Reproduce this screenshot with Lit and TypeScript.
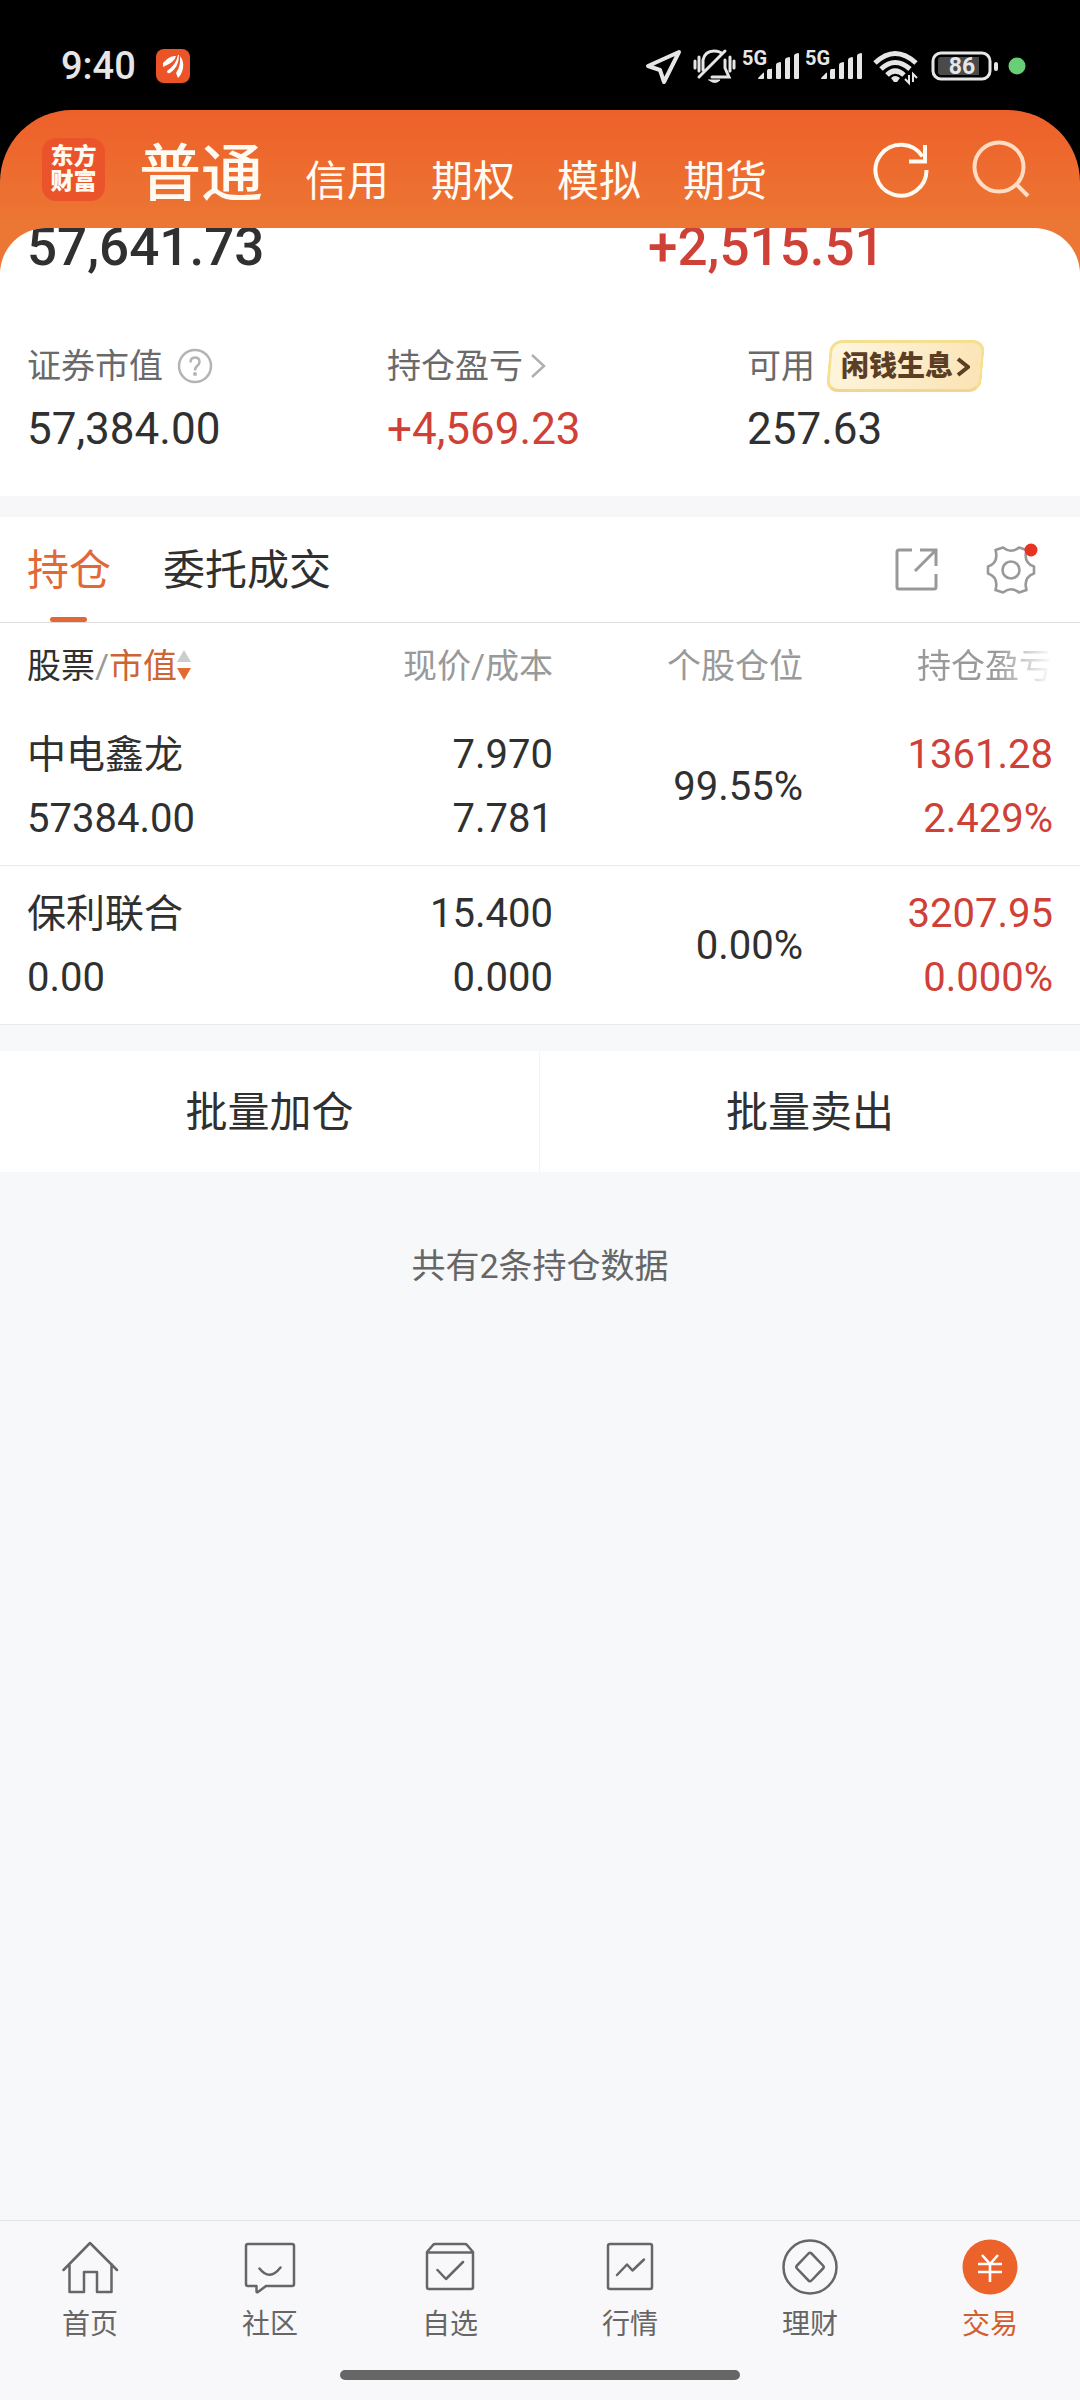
import { LitElement, html, css, svg } from "lit";
import { customElement, state } from "lit/decorators.js";
import { classMap } from "lit/directives/class-map.js";

interface Holding {
  name: string;
  value: string;
  price: string;
  cost: string;
  share: string;
  profit: string;
  rate: string;
}

const HOLDINGS: Holding[] = [
  { name: "中电鑫龙", value: "57384.00", price: "7.970", cost: "7.781", share: "99.55%", profit: "1361.28", rate: "2.429%" },
  { name: "保利联合", value: "0.00", price: "15.400", cost: "0.000", share: "0.00%", profit: "3207.95", rate: "0.000%" },
];

const MARKETS = ["普通", "信用", "期权", "模拟", "期货"];

const NAV = [
  {
    label: "首页",
    icon: svg`<path d="M3.500 31 30 4l27 27M9.500 25v28H24V33h13v20h14.500V25"/>`,
  },
  {
    label: "社区",
    icon: svg`<path d="M8 5h44q2 0 2 2v38q0 2-2 2H26l-8 6q-1.500 1-1.500-1v-5H8q-2 0-2-2V7q0-2 2-2zM19.500 29.500q10 13 21-1"/>`,
  },
  {
    label: "自选",
    icon: svg`<path d="M7 13l6-7q1-1 2-1h30q1 0 2 1l6 7v35q0 2-2 2H9q-2 0-2-2zM7 13.500h46M17.500 31l8.500 9 17-17"/>`,
  },
  {
    label: "行情",
    icon: svg`<rect x="8" y="5" width="44" height="45" rx="2"/><path d="M17 36 27 25.500l5.500 6L44 20.500"/>`,
  },
  {
    label: "理财",
    icon: svg`<circle cx="30" cy="28" r="26.500"/><path d="M28.500 14.500q1.500-1.500 3 0L43 26.500q1.500 1.500 0 3L31.500 41.500q-1.500 1.500-3 0L17 29.500q-1.500-1.500 0-3z"/>`,
  },
  {
    label: "交易",
    icon: svg`<circle cx="30" cy="28" r="27.500" fill="#ec622b" stroke="none"/><path stroke="#fff" stroke-linecap="butt" stroke-width="2.600" d="M22 16l8 9 8-9M18 25h24M18 33h24M30 24v19"/>`,
  },
];

const bars = svg`<path fill="#e6e6e6" d="M16 31q0-1 1-2l4-4q1-1 1 0v5q0 1-1 1h-4q-1 0-1-1zM25 23q0-1 1-2h3q1-1 1 0v9q0 1-1 1h-3q-1 0-1-1zM34 17q0-1 1-2l3-1q1 0 1 1v15q0 1-1 1h-3q-1 0-1-1zM43 12q0-1 1-2l3-1q1 0 1 1v20q0 1-1 1h-3q-1 0-1-1zM52 8q0-1 1-2l3-1q1 0 1 1v24q0 1-1 1h-3q-1 0-1-1z"/>`;

@customElement("status-bar")
export class StatusBar extends LitElement {
  static styles = css`
    :host {
      display: flex;
      align-items: center;
      justify-content: space-between;
      box-sizing: border-box;
      height: 110px;
      padding: 22px 54px 0 61px;
      color: #e6e6e6;
      background: #000;
    }
    .left {
      display: flex;
      align-items: center;
      gap: 20px;
      font-size: 38px;
      line-height: 40px;
      font-weight: 500;
    }
    .right {
      display: flex;
      align-items: center;
      gap: 4px;
    }
    svg {
      display: block;
      overflow: visible;
      fill: none;
    }
    text {
      fill: #e6e6e6;
      font-family: Roboto, sans-serif;
      font-weight: 700;
    }
  `;

  private signal() {
    return html`<svg width="59" height="36" viewBox="0 0 59 36" aria-hidden="true">
      <text x="0" y="17" font-size="20">5G</text>${bars}
    </svg>`;
  }

  render() {
    return html`
      <div class="left">
        <time>9:40</time>
        <svg width="34" height="34" viewBox="0 0 34 34" aria-hidden="true">
          <rect width="34" height="34" rx="8" fill="#ec5428" />
          <path fill="#fff" d="M7 14Q14 6 20 7q-1 6-13 11zM11 22Q20 16 22 6h1q0 12-9 18-3 1-3-2zM20 24q5-7 4-17 4 5 3 12-1 6-5 10z" />
        </svg>
      </div>
      <div class="right">
        <svg width="44" height="36" viewBox="0 0 44 36" aria-hidden="true">
          <path d="M35 4 4 18l12 4 4 12z" stroke="#e6e6e6" stroke-width="4" stroke-linejoin="round" />
        </svg>
        <svg width="46" height="36" viewBox="0 0 46 36" aria-hidden="true" stroke="#e6e6e6" stroke-width="3" stroke-linecap="round">
          <path d="M11 22V12Q13 3 22 3q6 0 8 3M33 12v8l4 9H20M7 29 33 3M3 13v7M7 9v14M38 9v14M42 13v7" />
          <path d="M17 32h11q-5 5-11 0z" fill="#e6e6e6" stroke-width="1" />
        </svg>
        ${this.signal()}${this.signal()}
        <svg width="56" height="36" viewBox="0 0 56 36" aria-hidden="true" stroke="#e6e6e6" stroke-width="5">
          <path d="M7 15q20-19 41 0M13 21q14-13 29 0M19 27q8-8 17 0" />
          <path d="M23 30q4-4 9 0l-3 4h-3z" fill="#e6e6e6" stroke="none" />
          <path d="M41 27v8l-4-4M45 34v-8l4 4" stroke-width="2" />
        </svg>
        <svg width="74" height="36" viewBox="0 0 74 36" role="img" aria-label="86%">
          <rect x="5" y="5" width="57" height="26" rx="8" stroke="#e6e6e6" stroke-width="3" />
          <path d="M10 12q0-3 3-3h38v18H13q-3 0-3-3z" fill="#4a4a4a" />
          <rect x="66" y="14" width="4" height="9" rx="2" fill="#e6e6e6" />
          <text x="34" y="26" font-size="23" text-anchor="middle">86</text>
        </svg>
        <svg width="20" height="36" viewBox="0 0 20 36" aria-hidden="true">
          <circle cx="11" cy="18" r="8.500" fill="#69cf76" />
        </svg>
      </div>
    `;
  }
}

@customElement("app-root")
export class AppRoot extends LitElement {
  @state() private market = 0;
  @state() private nav = 5;

  static styles = css`
    :host {
      display: flex;
      flex-direction: column;
      min-height: 100vh;
      color: #303030;
      background: #f6f8fa;
      font-family: Roboto, "Noto Sans CJK SC", sans-serif;
    }
    button {
      padding: 0;
      border: 0;
      background: none;
      color: inherit;
      font: inherit;
      cursor: pointer;
    }
    a {
      color: inherit;
      text-decoration: none;
    }
    svg {
      display: block;
      fill: none;
    }

    .shell {
      background: #000;
    }
    .app {
      border-radius: 72px 72px 0 0;
      background: linear-gradient(#ee602a, #ec7734 118px);
    }
    .header {
      display: flex;
      align-items: center;
      box-sizing: border-box;
      height: 118px;
      padding: 0 49px 0 42px;
      color: #fffaf2;
    }
    .logo {
      display: grid;
      place-content: center;
      width: 63px;
      height: 63px;
      margin-right: 34px;
      border-radius: 14px;
      background: #eb542a;
      font-size: 23px;
      line-height: 25px;
      font-weight: 900;
      text-align: center;
    }
    .markets {
      display: flex;
      align-items: baseline;
      flex: 1;
      gap: 42px;
      padding-top: 18px;
      font-size: 42px;
      line-height: 72px;
      white-space: nowrap;
    }
    .market.current {
      font-size: 62px;
      font-weight: 500;
    }
    .tools {
      display: flex;
      gap: 40px;
    }

    .panel {
      overflow: hidden;
      border-radius: 46px 46px 0 0;
      background: #fff;
    }
    .totals {
      display: grid;
      grid-template-columns: 3fr 2fr;
      margin-top: -11px;
      font-size: 53px;
      line-height: 60px;
      font-weight: 500;
    }
    .total:first-child {
      padding-left: 27px;
    }
    .metrics {
      display: grid;
      grid-template-columns: repeat(3, 1fr);
      margin: 0;
      padding: 63px 0 41px;
    }
    .metric {
      padding-left: 27px;
    }
    .metric-name {
      display: flex;
      align-items: center;
      height: 52px;
      margin-bottom: 11px;
      color: #6a6a6a;
      font-size: 34px;
      line-height: 54px;
      white-space: nowrap;
    }
    .metric-value {
      margin: 0;
      font-size: 44px;
      line-height: 52px;
    }
    .help {
      margin-left: 14px;
    }
    .more {
      display: flex;
      align-items: center;
      gap: 7px;
    }
    .badge {
      position: relative;
      display: flex;
      align-items: center;
      gap: 3px;
      height: 50px;
      margin-left: 11px;
      padding: 2px 15px 0;
      color: #5c3e24;
      font-size: 28px;
      font-weight: 900;
      isolation: isolate;
    }
    .badge::before {
      content: "";
      position: absolute;
      inset: 0 2px;
      z-index: -1;
      box-sizing: border-box;
      border: 3px solid #f6e08f;
      border-bottom-color: #f3d592;
      border-radius: 12px;
      background: linear-gradient(115deg, #fef6de, #fbe3b4);
      transform: skewX(-5deg);
    }
    .rise {
      color: #cf4037;
    }

    .holdings {
      margin-top: 21px;
      background: #fff;
    }
    .gap {
      background: #f7f7fa;
      overflow: hidden;
    }
    .tabs {
      display: flex;
      align-items: center;
      box-sizing: border-box;
      height: 106px;
      padding: 0 42px 0 27px;
      border-bottom: 1px solid #dcdcdc;
      font-size: 42px;
      line-height: 103px;
    }
    .tab {
      position: relative;
      margin-right: 52px;
      padding-top: 2px;
    }
    .tab.current {
      color: #df6a37;
    }
    .tab.current::after {
      content: "";
      position: absolute;
      bottom: 0;
      left: calc(50% - 19px);
      width: 37px;
      height: 5px;
      border-radius: 3px;
      background: #e26735;
    }
    .tab-tools {
      display: flex;
      align-items: center;
      gap: 46px;
      margin-left: auto;
    }

    table {
      width: 100%;
      table-layout: fixed;
      border-spacing: 0;
      border-collapse: separate;
    }
    .col-number {
      width: 250px;
    }
    .col-last {
      width: 277px;
    }
    th,
    td {
      padding: 0;
      text-align: right;
      font-weight: 400;
      white-space: nowrap;
    }
    th:first-child {
      padding-left: 27px;
      text-align: left;
    }
    th:last-child,
    td:last-child {
      padding-right: 27px;
    }
    thead th {
      height: 82px;
      padding-top: 2px;
      color: #999;
      font-size: 34px;
      line-height: 82px;
    }
    .sort {
      display: flex;
      align-items: center;
    }
    .sort-stock {
      color: #303030;
    }
    .sort-value {
      color: #cd6434;
    }
    .fade {
      mask-image: linear-gradient(to right, #000 58%, transparent 100%);
    }
    tbody th,
    tbody td {
      height: 128px;
      padding-top: 16px;
      padding-bottom: 14px;
      border-bottom: 1px solid #ebebeb;
      font-size: 40px;
      line-height: 64px;
    }
    .line {
      display: block;
    }
    .stock {
      font-size: 39px;
    }

    .actions {
      display: grid;
      grid-template-columns: 1fr 1fr;
      margin-top: 26px;
      background: #fff;
    }
    .action {
      padding-top: 2px;
      font-size: 42px;
      line-height: 119px;
    }
    .action:first-child {
      border-right: 1px solid #f3f3f3;
    }
    .note {
      margin: 68px 0;
      color: #666;
      font-size: 34px;
      line-height: 52px;
      text-align: center;
    }

    .bottom {
      position: sticky;
      bottom: 0;
      margin-top: auto;
      border-top: 1px solid #e2e4e6;
      background: #f8f8fa;
    }
    .nav {
      display: grid;
      grid-template-columns: repeat(6, 1fr);
      padding-top: 18px;
    }
    .nav-item {
      display: flex;
      flex-direction: column;
      align-items: center;
      gap: 10px;
      color: #666;
      font-size: 28px;
      line-height: 40px;
    }
    .nav-item.current {
      color: #d2602f;
    }
    .pill {
      width: 37%;
      height: 10px;
      margin: 25px auto 20px;
      border-radius: 5px;
      background: #666;
    }
  `;

  private renderHeader() {
    return html`
      <header class="header">
        <div class="logo"><span>东方</span><span>财富</span></div>
        <nav class="markets">
          ${MARKETS.map(
            (name, i) => html`<button
              class=${classMap({ market: true, current: i === this.market })}
              @click=${() => (this.market = i)}
            >${name}</button>`
          )}
        </nav>
        <div class="tools">
          <button aria-label="刷新">
            <svg width="60" height="60" viewBox="0 0 60 60" stroke="#fffaf2" stroke-width="4">
              <path d="M55.500 31A25.500 25.500 0 1 1 51.500 17.500M54 6v16.500H38" />
            </svg>
          </button>
          <button aria-label="搜索">
            <svg width="60" height="60" viewBox="0 0 60 60" stroke="#ffdcc2" stroke-width="4">
              <circle cx="28" cy="28" r="24.500" />
              <path d="M45 45 57 57" />
            </svg>
          </button>
        </div>
      </header>
    `;
  }

  private renderAccount() {
    return html`
      <section class="panel">
        <div class="totals">
          <span class="total">57,641.73</span>
          <span class="total rise">+2,515.51</span>
        </div>
        <dl class="metrics">
          <div class="metric">
            <dt class="metric-name">
              证券市值
              <button class="help" aria-label="说明">
                <svg width="36" height="36" viewBox="0 0 36 36" stroke="#b4b4b4" stroke-width="2.500">
                  <circle cx="18" cy="18" r="16" />
                  <path d="M13.500 14.500q0-5 4.500-5t4.500 4.500q0 2-2.500 4-2 2-2 4.500" />
                  <circle cx="18" cy="26" r="2" fill="#b4b4b4" stroke="none" />
                </svg>
              </button>
            </dt>
            <dd class="metric-value">57,384.00</dd>
          </div>
          <div class="metric">
            <dt class="metric-name">
              <a class="more" href="#profit">
                持仓盈亏
                <svg width="16" height="26" viewBox="0 0 16 26" stroke="#b0b0b0" stroke-width="2.500">
                  <path d="M2 2l12 11L2 24" />
                </svg>
              </a>
            </dt>
            <dd class="metric-value rise">+4,569.23</dd>
          </div>
          <div class="metric">
            <dt class="metric-name">
              可用
              <a class="badge" href="#interest">
                闲钱生息
                <svg width="14" height="20" viewBox="0 0 14 20" stroke="#5c3e24" stroke-width="4">
                  <path d="M2 2l10 8-10 8" />
                </svg>
              </a>
            </dt>
            <dd class="metric-value">257.63</dd>
          </div>
        </dl>
      </section>
    `;
  }

  private renderHoldings() {
    return html`
      <div class="gap">
        <section class="holdings">
          <div class="tabs">
            <button class="tab current">持仓</button>
            <button class="tab">委托成交</button>
            <div class="tab-tools">
              <button aria-label="分享">
                <svg width="44" height="44" viewBox="0 0 44 44" stroke="#999" stroke-width="3">
                  <path d="M18 2H5q-2 0-2 2v35q0 2 2 2h35q2 0 2-2V26M26 2h16v16M42 2 21 23" />
                </svg>
              </button>
              <button aria-label="设置">
                <svg width="54" height="54" viewBox="0 0 54 54">
                  <g stroke="#999" stroke-width="2.600" stroke-linejoin="round">
                    <circle cx="27" cy="27" r="8.500" />
                    <path d="M11.500 7 19 4.500Q27 11 35 4.500L42.500 7C40 16 43 21 50 23.500V30.500C43 33 40 38 42.500 47L35 49.500Q27 43 19 49.500L11.500 47C14 38 11 33 4 30.500V23.500C11 21 14 16 11.500 7z" />
                  </g>
                  <circle cx="47" cy="7" r="6.500" fill="#e73323" />
                </svg>
              </button>
            </div>
          </div>
          <table>
            <colgroup>
              <col />
              <col class="col-number" />
              <col class="col-number" />
              <col class="col-last" />
            </colgroup>
            <thead>
              <tr>
                <th scope="col">
                  <button class="sort">
                    <span class="sort-stock">股票</span>
                    <span class="sort-slash">/</span>
                    <span class="sort-value">市值</span>
                    <svg width="16" height="32" viewBox="0 0 16 32">
                      <path d="M7 0l7 12H0z" fill="#ccc" />
                      <path d="M7 30l7-12H0z" fill="#e26a33" />
                    </svg>
                  </button>
                </th>
                <th scope="col">现价/成本</th>
                <th scope="col">个股仓位</th>
                <th scope="col"><span class="fade">持仓盈亏</span></th>
              </tr>
            </thead>
            <tbody>
              ${HOLDINGS.map(
                (h) => html`<tr>
                  <th scope="row">
                    <span class="line stock">${h.name}</span>
                    <span class="line">${h.value}</span>
                  </th>
                  <td><span class="line">${h.price}</span><span class="line">${h.cost}</span></td>
                  <td>${h.share}</td>
                  <td class="rise"><span class="line">${h.profit}</span><span class="line">${h.rate}</span></td>
                </tr>`
              )}
            </tbody>
          </table>
        </section>
      </div>
    `;
  }

  render() {
    return html`
      <div class="shell">
        <status-bar></status-bar>
        <div class="app">${this.renderHeader()}${this.renderAccount()}</div>
      </div>
      ${this.renderHoldings()}
      <div class="actions">
        <button class="action">批量加仓</button>
        <button class="action">批量卖出</button>
      </div>
      <p class="note">共有2条持仓数据</p>
      <footer class="bottom">
        <nav class="nav">
          ${NAV.map(
            (item, i) => html`<a
              href="#"
              class=${classMap({ "nav-item": true, current: i === this.nav })}
              @click=${(e: Event) => {
                e.preventDefault();
                this.nav = i;
              }}
            >
              <svg width="60" height="56" viewBox="0 0 60 56" stroke="#666" stroke-width="2.500" stroke-linecap="round" stroke-linejoin="round" aria-hidden="true">
                ${item.icon}
              </svg>
              <span>${item.label}</span>
            </a>`
          )}
        </nav>
        <div class="pill"></div>
      </footer>
    `;
  }
}
